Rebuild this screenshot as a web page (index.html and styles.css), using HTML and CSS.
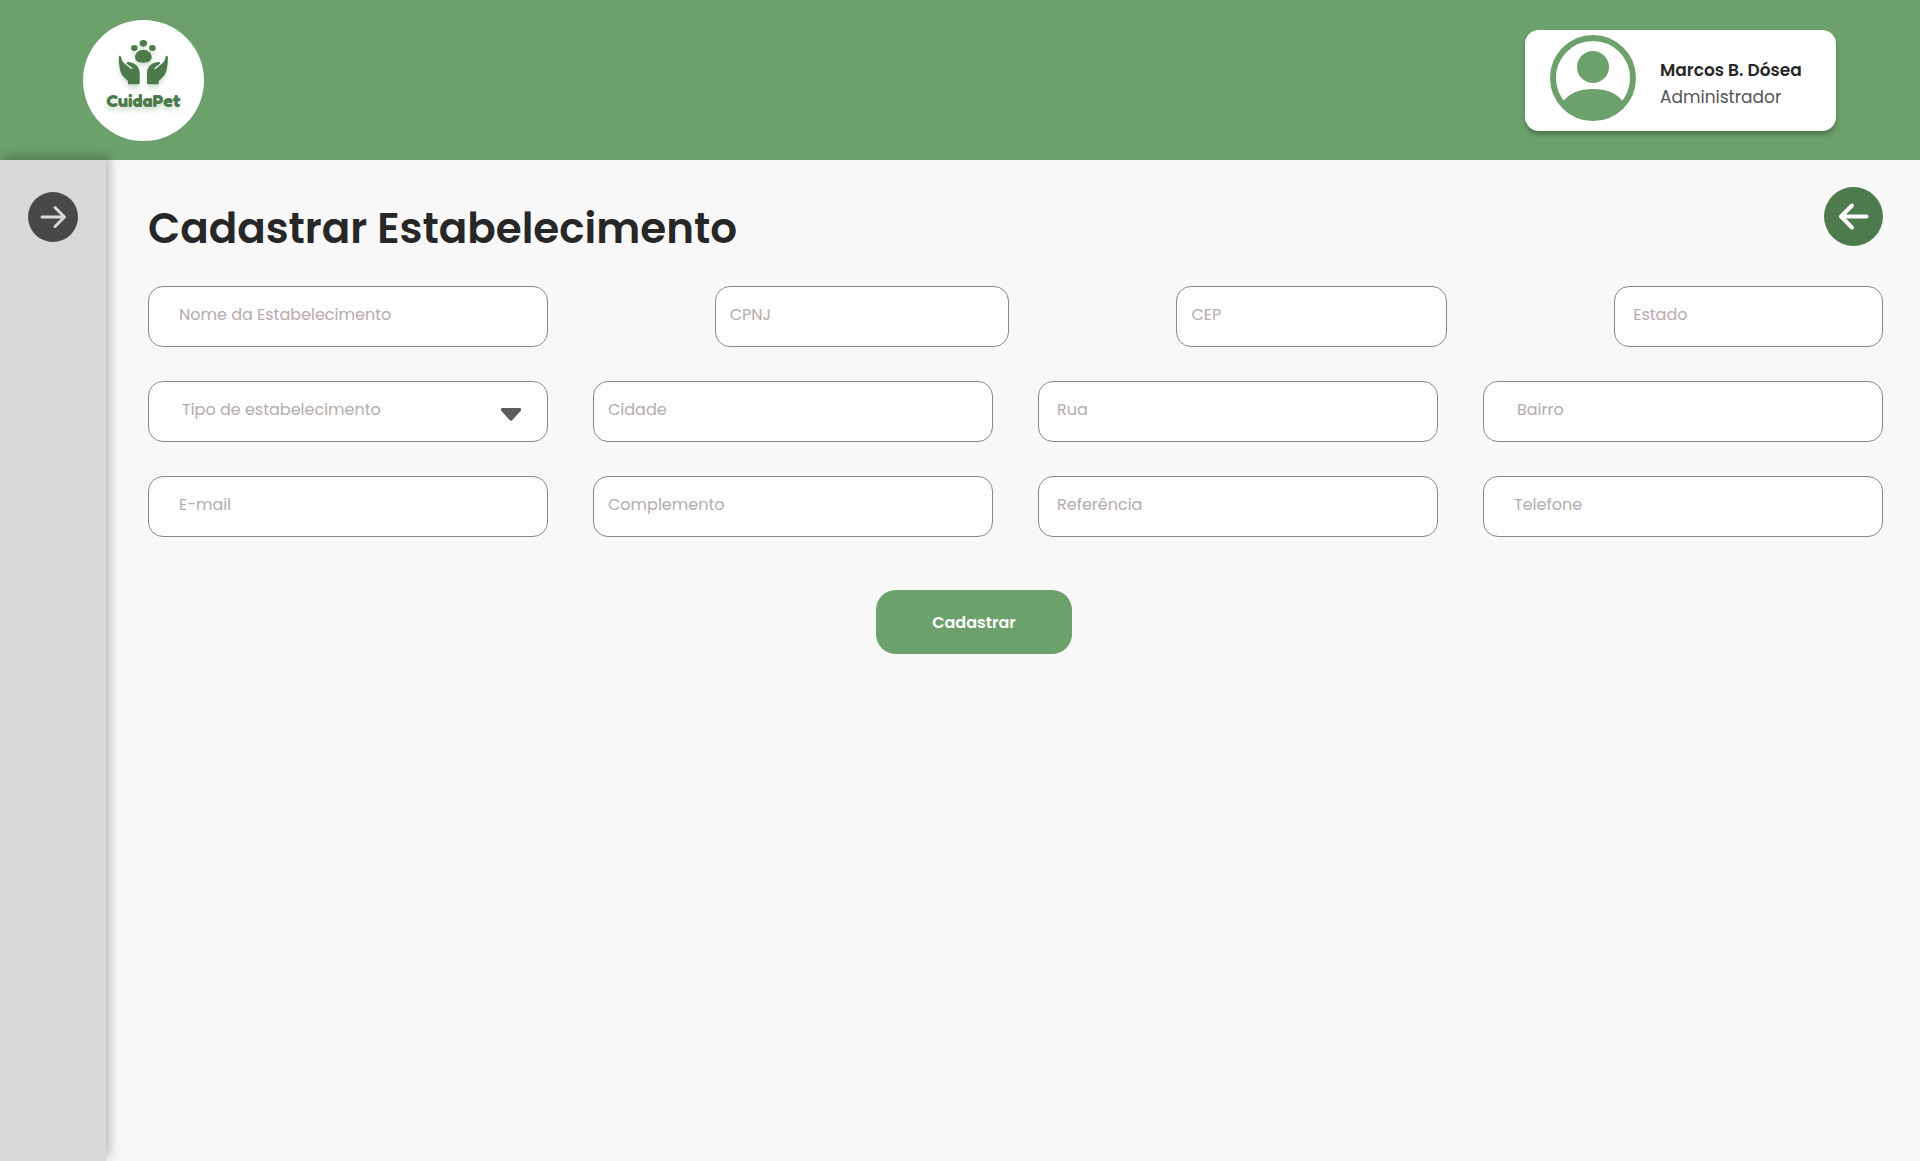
FILE: index.html
```html
<!DOCTYPE html>
<html lang="pt-BR">
<head>
  <meta charset="utf-8">
  <meta name="viewport" content="width=device-width, initial-scale=1">
  <title>CuidaPet - Cadastrar Estabelecimento</title>
  <link rel="stylesheet" href="styles.css">
</head>
<body>
  <header class="topbar">
    <a class="logo" href="#">
      <svg class="logo-mark" viewBox="142 85 156 142" aria-hidden="true">
        <ellipse cx="191" cy="114" rx="10" ry="9"/>
        <ellipse cx="218" cy="100" rx="11" ry="10"/>
        <ellipse cx="245" cy="114" rx="10" ry="9"/>
        <path d="M218 119C232 119 243 129 243 141C243 153 233 158 218 158C203 158 193 153 193 141C193 129 204 119 218 119Z"/>
        <path id="hand" d="M145 138C149 136 151 139 152 144C153 152 157 158 164 162L180 176C184 179 187 177 184 173L169 162C165 158 169 155 174 156C192 158 207 169 207 188V218Q207 223 202 223H172V213C160 203 151 193 149 183C146 170 143 152 145 138Z"/>
        <use href="#hand" transform="translate(436 0) scale(-1 1)"/>
      </svg>
      <span class="logo-name">CuidaPet</span>
    </a>
    <div class="profile">
      <svg class="avatar" viewBox="0 0 86 86" aria-hidden="true">
        <circle cx="43" cy="43" r="40" fill="none" stroke="currentColor" stroke-width="6"/>
        <circle cx="43" cy="32" r="16" fill="currentColor"/>
        <path d="M13 67C19 58 29 54 43 54C57 54 67 58 73 67C65 78 55 83 43 83C31 83 21 78 13 67Z" fill="currentColor"/>
      </svg>
      <div class="profile-text">
        <strong class="profile-name">Marcos B. Dósea</strong>
        <span class="profile-role">Administrador</span>
      </div>
    </div>
  </header>

  <div class="layout">
    <nav class="sidebar">
      <button class="round-button menu-button" type="button" aria-label="Abrir menu">
        <svg viewBox="0 0 50 50" aria-hidden="true"><path d="M14 25H36M27 15.500L36.500 25L27 34.500"/></svg>
      </button>
    </nav>

    <main class="content">
      <div class="page-head">
        <h1 class="title">Cadastrar Estabelecimento</h1>
        <button class="round-button back-button" type="button" aria-label="Voltar">
          <svg viewBox="0 0 59 59" aria-hidden="true"><path d="M42.500 29.500H17M28 18.500L17 29.500L28 40.500"/></svg>
        </button>
      </div>

      <form class="form">
        <div class="row row-main">
          <input class="field indent-large" type="text" placeholder="Nome da Estabelecimento" aria-label="Nome da Estabelecimento">
          <input class="field indent-small" type="text" placeholder="CPNJ" aria-label="CPNJ">
          <input class="field indent-small" type="text" placeholder="CEP" aria-label="CEP">
          <input class="field indent-medium" type="text" placeholder="Estado" aria-label="Estado">
        </div>
        <div class="row">
          <div class="select-box">
            <select class="field indent-wide" aria-label="Tipo de estabelecimento">
              <option>Tipo de estabelecimento</option>
            </select>
            <svg class="caret" viewBox="0 0 20 13" aria-hidden="true"><path d="M1 0H19Q20 0 20 1V2.500L11.500 12Q10 13.500 8.500 12L0 2.500V1Q0 0 1 0Z"/></svg>
          </div>
          <input class="field indent-small" type="text" placeholder="Cidade" aria-label="Cidade">
          <input class="field indent-medium" type="text" placeholder="Rua" aria-label="Rua">
          <input class="field indent-wide" type="text" placeholder="Bairro" aria-label="Bairro">
        </div>
        <div class="row">
          <input class="field indent-large" type="email" placeholder="E-mail" aria-label="E-mail">
          <input class="field indent-small" type="text" placeholder="Complemento" aria-label="Complemento">
          <input class="field indent-medium" type="text" placeholder="Referência" aria-label="Referência">
          <input class="field indent-large" type="tel" placeholder="Telefone" aria-label="Telefone">
        </div>
        <div class="actions">
          <button class="submit" type="submit">Cadastrar</button>
        </div>
      </form>
    </main>
  </div>
</body>
</html>
```
FILE: styles.css
```css
* {
  box-sizing: border-box;
}

body {
  display: flex;
  flex-direction: column;
  min-height: 100vh;
  margin: 0;
  background: #f8f8f8;
  color: #272727;
  font-family: Poppins, Inter, sans-serif;
  font-size: 16px;
}

button,
input,
select {
  font: inherit;
}

/* Top bar */
.topbar {
  display: flex;
  align-items: center;
  justify-content: space-between;
  height: 160px;
  padding: 0 84px 0 83px;
  background: #6da16c;
}

.logo {
  display: flex;
  flex-direction: column;
  align-items: center;
  width: 121px;
  height: 121px;
  padding-top: 18px;
  border-radius: 50%;
  background: #fff;
  color: #4d7a4b;
  text-decoration: none;
}

.logo-mark {
  width: 52px;
  height: 48px;
  fill: currentColor;
  filter: drop-shadow(0 4px 2px rgba(109, 161, 108, 0.3));
}

.logo-name {
  margin-top: 2px;
  font-family: Fredoka, Lato, sans-serif;
  font-size: 18px;
  font-weight: 700;
  line-height: 24px;
  text-shadow: 0 4px 4px rgba(109, 161, 108, 0.3);
}

.profile {
  display: flex;
  gap: 24px;
  width: 311px;
  height: 101px;
  padding: 5px 24px 0 25px;
  border-radius: 14px;
  background: #fff;
  box-shadow: 0 4px 4px rgba(0, 0, 0, 0.25);
}

.avatar {
  flex: none;
  width: 86px;
  height: 86px;
  color: #6da16c;
}

.profile-text {
  display: flex;
  flex-direction: column;
  padding-top: 22px;
  font-size: 17px;
  line-height: 27px;
  white-space: nowrap;
}

.profile-name {
  font-weight: 600;
}

.profile-role {
  color: #555;
}

/* Sidebar and page body */
.layout {
  display: flex;
  flex: 1;
}

.sidebar {
  position: relative;
  flex: none;
  width: 106px;
  padding: 32px 28px;
  background: #d9d9d9;
  box-shadow: 4px -4px 10px rgba(0, 0, 0, 0.25);
}

.round-button {
  display: block;
  flex: none;
  padding: 0;
  border: 0;
  border-radius: 50%;
  cursor: pointer;
}

.round-button svg {
  display: block;
  fill: none;
  stroke: currentColor;
  stroke-linecap: round;
  stroke-linejoin: round;
}

.menu-button {
  width: 50px;
  height: 50px;
  background: #484848;
  color: #d9d9d9;
  stroke-width: 3px;
}

.back-button {
  width: 59px;
  height: 59px;
  background: #4e7b4d;
  color: #fff;
  stroke-width: 4px;
}

.content {
  flex: 1;
  min-width: 0;
  padding: 27px 37px 40px 42px;
}

.page-head {
  display: flex;
  justify-content: space-between;
  margin-bottom: 40px;
}

.title {
  height: 59px;
  margin: 0;
  padding-top: 12px;
  font-size: 42px;
  font-weight: 600;
  line-height: 60px;
  white-space: nowrap;
}

/* Form */
.form {
  display: grid;
  gap: 34px;
}

.row {
  display: grid;
  grid-template-columns: repeat(4, minmax(0, 1fr));
  gap: 45px;
}

.row-main {
  grid-template-columns: 400fr 295fr 271fr 269fr;
  gap: 167px;
}

.field {
  width: 100%;
  min-width: 0;
  height: 61px;
  padding: 0 16px 4px;
  border: 1px solid #888;
  border-radius: 15px;
  background: #fdfdfd;
  color: #b5adad;
  appearance: none;
}

.field::placeholder {
  color: #b5adad;
  opacity: 1;
}

.indent-small {
  padding-left: 14px;
}

.indent-medium {
  padding-left: 18px;
}

.indent-large {
  padding-left: 30px;
}

.indent-wide {
  padding-left: 33px;
}

.select-box {
  position: relative;
}

.caret {
  position: absolute;
  top: 27px;
  right: 27px;
  width: 20px;
  height: 13px;
  fill: #5f5b5b;
  pointer-events: none;
}

.actions {
  display: flex;
  justify-content: center;
  padding: 19px 83px 0 0;
}

.submit {
  width: 196px;
  height: 64px;
  border: 0;
  border-radius: 20px;
  background: #6da16c;
  color: #fff;
  font-weight: 600;
  cursor: pointer;
}
```
